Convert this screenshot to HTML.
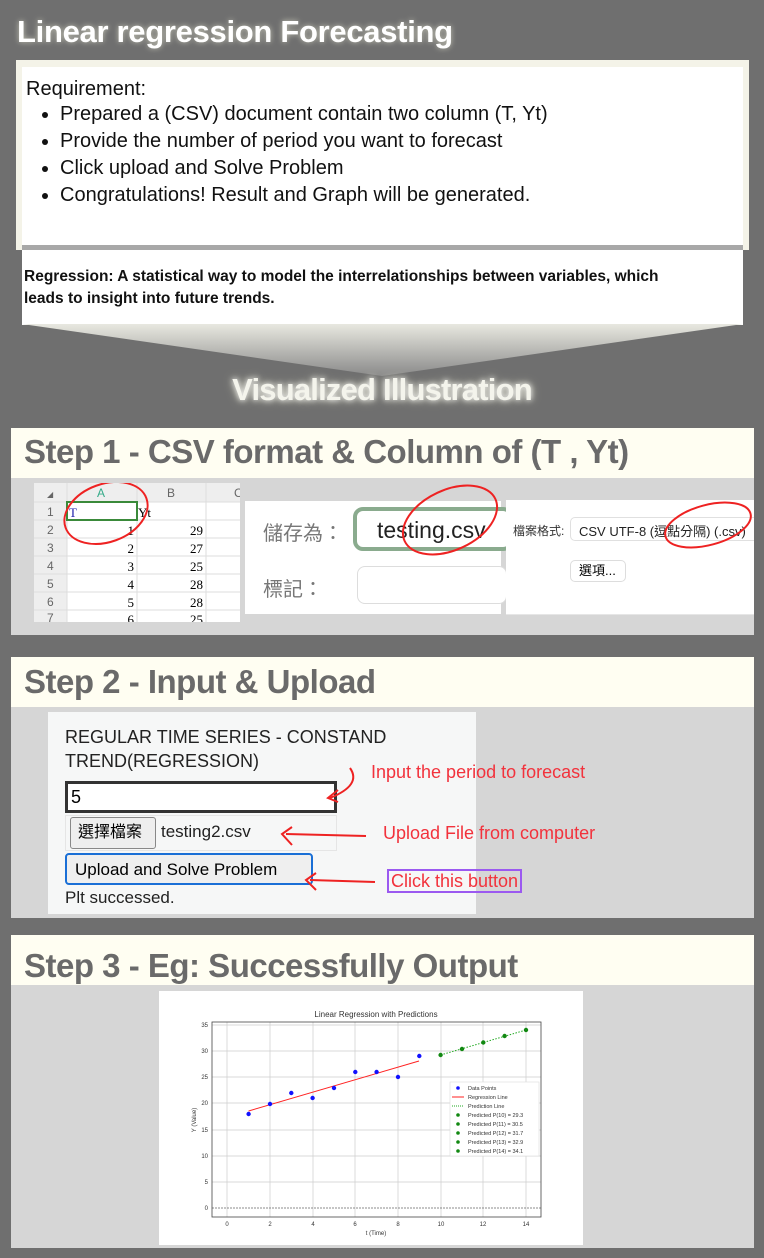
<!DOCTYPE html><html><head><meta charset="utf-8"><style>
*{margin:0;padding:0;box-sizing:border-box}
body{width:764px;height:1258px;background:#6f6f6f;position:relative;overflow:hidden;font-family:"Liberation Sans","Noto Sans CJK TC",sans-serif}
.a{position:absolute}
.h{font-weight:bold;color:#6a6a6a;font-size:33px;letter-spacing:-0.5px;white-space:nowrap}
.sec{background:#d6d6d6}
.hd{background:#fffef2}
ul{margin-left:34px}
li{font-size:20px;line-height:27px;color:#111}
.red{color:#f2323c;font-size:18px;white-space:nowrap}
</style></head><body>
<div class="a" style="left:17px;top:14px;color:#fff;font-weight:bold;font-size:31px;letter-spacing:-0.3px;text-shadow:0 0 6px rgba(255,255,230,.6)">Linear regression Forecasting</div>
<div class="a" style="left:16px;top:60px;width:733px;height:190px;background:#f4f3e8"></div>
<div class="a" style="left:22px;top:67px;width:721px;height:178px;background:#fff;padding:10px 4px">
<div style="font-size:20px;color:#111;line-height:24px">Requirement:</div>
<ul><li>Prepared a (CSV) document contain two column (T, Yt)</li><li>Provide the number of period you want to forecast</li><li>Click upload and Solve Problem</li><li>Congratulations! Result and Graph will be generated.</li></ul></div>
<div class="a" style="left:22px;top:245px;width:721px;height:5px;background:#a8a8a8"></div>
<div class="a" style="left:22px;top:250px;width:721px;height:75px;background:#fff;padding:16px 2px;font-weight:bold;font-size:15.5px;line-height:22px;color:#111;white-space:nowrap">Regression: A statistical way to model the interrelationships between variables, which<br>leads to insight into future trends.</div>
<svg class="a" style="left:0;top:324px" width="764" height="54"><defs><linearGradient id="g" x1="0" y1="0" x2="0" y2="1"><stop offset="0" stop-color="#e8e8e0"/><stop offset="1" stop-color="#8a8a8a"/></linearGradient></defs><polygon points="22,0 743,0 382,52" fill="url(#g)"/></svg>
<div class="a" style="left:0;width:764px;top:372px;text-align:center;color:#f4f4ec;font-weight:bold;font-size:31px;letter-spacing:-0.8px;text-shadow:0 0 6px #fff,0 0 10px rgba(255,255,220,.7)">Visualized Illustration</div>

<!-- Step1 -->
<div class="a sec" style="left:11px;top:428px;width:743px;height:207px"></div>
<div class="a hd" style="left:11px;top:428px;width:743px;height:50px"></div>
<div class="a h" style="left:24px;top:433px">Step 1 - CSV format &amp; Column of (T , Yt)</div>
<svg class="a" style="left:34px;top:483px" width="206" height="139" font-family="Liberation Serif" font-size="13">
<rect width="206" height="139" fill="#fff"/>
<rect width="206" height="19" fill="#eee"/><rect width="33" height="139" fill="#eee"/>
<g stroke="#ddd"><line x1="33" y1="0" x2="33" y2="139"/><line x1="103" y1="0" x2="103" y2="139"/><line x1="172" y1="0" x2="172" y2="139"/>
<line x1="0" y1="19" x2="206" y2="19"/><line x1="0" y1="37" x2="206" y2="37"/><line x1="0" y1="55" x2="206" y2="55"/><line x1="0" y1="73" x2="206" y2="73"/><line x1="0" y1="91" x2="206" y2="91"/><line x1="0" y1="109" x2="206" y2="109"/><line x1="0" y1="127" x2="206" y2="127"/></g>
<g fill="#666" font-family="Liberation Sans" font-size="12"><text x="13" y="14" font-size="8">◢</text><text x="63" y="14" fill="#3a8">A</text><text x="133" y="14">B</text><text x="200" y="14">C</text>
<text x="13" y="33">1</text><text x="13" y="51">2</text><text x="13" y="69">3</text><text x="13" y="87">4</text><text x="13" y="105">5</text><text x="13" y="123">6</text><text x="13" y="139">7</text></g>
<rect x="33" y="19" width="70" height="18" fill="none" stroke="#3a8a3a" stroke-width="2"/>
<text x="35" y="34" fill="#22a">T</text><text x="104" y="34">Yt</text>
<g text-anchor="end"><text x="100" y="52">1</text><text x="100" y="70">2</text><text x="100" y="88">3</text><text x="100" y="106">4</text><text x="100" y="124">5</text><text x="100" y="141">6</text>
<text x="169" y="52">29</text><text x="169" y="70">27</text><text x="169" y="88">25</text><text x="169" y="106">28</text><text x="169" y="124">28</text><text x="169" y="141">25</text></g>
<ellipse cx="72" cy="30" rx="43" ry="29" fill="none" stroke="#e22" stroke-width="2" transform="rotate(-20 72 30)"/>
</svg>
<div class="a" style="left:245px;top:501px;width:256px;height:113px;background:#fff"></div>
<div class="a" style="left:263px;top:517px;font-size:20px;color:#777">儲存為：</div>
<div class="a" style="left:263px;top:573px;font-size:20px;color:#777">標記：</div>
<div class="a" style="left:353px;top:507px;width:160px;height:44px;border:4px solid #8aab8e;border-radius:10px;background:#fff;padding:6px 0 0 20px;font-size:23px;color:#222">testing.csv</div>
<div class="a" style="left:357px;top:566px;width:150px;height:38px;border:1px solid #ddd;border-radius:8px;background:#fff"></div>
<div class="a" style="left:506px;top:500px;width:248px;height:115px;background:#fff;border-bottom:1px solid #e6e6e6;overflow:hidden">
<div class="a" style="left:7px;top:22px;font-size:12px;color:#333">檔案格式:</div>
<div class="a" style="left:64px;top:17px;width:200px;height:24px;border:1px solid #e0e0e0;border-radius:5px;padding:3px 0 0 8px;font-size:13px;color:#222;white-space:nowrap;background:#fff">CSV UTF-8 (逗點分隔) (.csv)</div>
<div class="a" style="left:64px;top:60px;width:56px;height:22px;border:1px solid #ddd;border-radius:5px;font-size:13px;line-height:20px;padding-left:8px;background:#fff">選項...</div>
</div>
<svg class="a" style="left:0;top:480px" width="764" height="150"><g fill="none" stroke="#e22" stroke-width="2"><ellipse cx="450" cy="40" rx="50" ry="30" transform="rotate(-25 450 40)"/><ellipse cx="708" cy="45" rx="44" ry="20" transform="rotate(-15 708 45)"/></g></svg>

<!-- Step2 -->
<div class="a sec" style="left:11px;top:657px;width:743px;height:261px"></div>
<div class="a hd" style="left:11px;top:657px;width:743px;height:50px"></div>
<div class="a h" style="left:24px;top:663px">Step 2 - Input &amp; Upload</div>
<div class="a" style="left:48px;top:712px;width:428px;height:202px;background:#f6f7f7"></div>
<div class="a" style="left:65px;top:725px;font-size:18px;line-height:24px;color:#222">REGULAR TIME SERIES - CONSTAND<br>TREND(REGRESSION)</div>
<div class="a" style="left:65px;top:781px;width:272px;height:32px;border:3px solid #333;background:#fff;font-size:18px;padding:3px 0 0 3px">5</div>
<div class="a" style="left:65px;top:815px;width:272px;height:36px;border:1px solid #e5e5e5"></div>
<div class="a" style="left:70px;top:817px;width:86px;height:32px;border:1px solid #888;border-radius:3px;background:#eee;font-size:16px;line-height:30px;padding-left:7px">選擇檔案</div>
<div class="a" style="left:161px;top:822px;font-size:17px;color:#222">testing2.csv</div>
<div class="a" style="left:65px;top:853px;width:248px;height:32px;border:2px solid #1a6fd6;border-radius:4px;background:#efefef;font-size:17px;padding:5px 0 0 8px;white-space:nowrap">Upload and Solve Problem</div>
<div class="a" style="left:65px;top:888px;font-size:17px;color:#222">Plt successed.</div>
<div class="a red" style="left:371px;top:762px">Input the period to forecast</div>
<div class="a red" style="left:383px;top:823px">Upload File from computer</div>
<div class="a red" style="left:387px;top:869px;border:2px solid #9b59f0;padding:0 2px;height:24px;line-height:20px">Click this button</div>
<svg class="a" style="left:0;top:650px" width="764" height="260"><g fill="none" stroke="#e22" stroke-width="2"><path d="M350 118 Q362 135 330 148"/><path d="M338 140 L328 148 L338 152"/><path d="M366 186 L286 184"/><path d="M292 177 L282 184 L292 195"/><path d="M375 232 L310 230"/><path d="M316 223 L306 230 L316 240"/></g></svg>

<!-- Step3 -->
<div class="a sec" style="left:11px;top:935px;width:743px;height:313px"></div>
<div class="a hd" style="left:11px;top:935px;width:743px;height:50px"></div>
<div class="a h" style="left:24px;top:947px">Step 3 - Eg: Successfully Output</div>
<svg class="a" style="left:0;top:0" width="764" height="1258" font-family="Liberation Sans" font-size="6" fill="#333">
<rect x="159" y="991" width="424" height="254" fill="#fff"/>
<text x="376" y="1017" font-size="8" text-anchor="middle">Linear Regression with Predictions</text>
<g stroke="#ccc" stroke-width="0.7">
<line x1="227" y1="1022" x2="227" y2="1217"/><line x1="270" y1="1022" x2="270" y2="1217"/><line x1="313" y1="1022" x2="313" y2="1217"/><line x1="355" y1="1022" x2="355" y2="1217"/><line x1="398" y1="1022" x2="398" y2="1217"/><line x1="441" y1="1022" x2="441" y2="1217"/><line x1="483" y1="1022" x2="483" y2="1217"/><line x1="526" y1="1022" x2="526" y2="1217"/>
<line x1="212" y1="1025" x2="541" y2="1025"/><line x1="212" y1="1051" x2="541" y2="1051"/><line x1="212" y1="1077" x2="541" y2="1077"/><line x1="212" y1="1103" x2="541" y2="1103"/><line x1="212" y1="1130" x2="541" y2="1130"/><line x1="212" y1="1156" x2="541" y2="1156"/><line x1="212" y1="1182" x2="541" y2="1182"/></g>
<line x1="212" y1="1208" x2="541" y2="1208" stroke="#666" stroke-width="0.7" stroke-dasharray="2 1"/>
<rect x="212" y="1022" width="329" height="195" fill="none" stroke="#444" stroke-width="0.8"/>
<g text-anchor="middle"><text x="227" y="1226">0</text><text x="270" y="1226">2</text><text x="313" y="1226">4</text><text x="355" y="1226">6</text><text x="398" y="1226">8</text><text x="441" y="1226">10</text><text x="483" y="1226">12</text><text x="526" y="1226">14</text><text x="376" y="1235">t (Time)</text></g>
<g text-anchor="end"><text x="208" y="1027">35</text><text x="208" y="1053">30</text><text x="208" y="1079">25</text><text x="208" y="1105">20</text><text x="208" y="1132">15</text><text x="208" y="1158">10</text><text x="208" y="1184">5</text><text x="208" y="1210">0</text></g>
<text transform="translate(196 1120) rotate(-90)" text-anchor="middle">Y (Value)</text>
<line x1="248.6" y1="1111" x2="419" y2="1061" stroke="#f22" stroke-width="1"/>
<line x1="440.6" y1="1055" x2="526" y2="1030" stroke="#2a2" stroke-width="1" stroke-dasharray="1.5 1.5"/>
<g fill="#11f"><circle cx="248.6" cy="1114" r="2.2"/><circle cx="270" cy="1104" r="2.2"/><circle cx="291.3" cy="1093" r="2.2"/><circle cx="312.6" cy="1098" r="2.2"/><circle cx="334" cy="1088" r="2.2"/><circle cx="355.3" cy="1072" r="2.2"/><circle cx="376.6" cy="1072" r="2.2"/><circle cx="398" cy="1077" r="2.2"/><circle cx="419.3" cy="1056" r="2.2"/></g>
<g fill="#181"><circle cx="440.6" cy="1055" r="2.2"/><circle cx="462" cy="1049" r="2.2"/><circle cx="483.3" cy="1042.5" r="2.2"/><circle cx="504.6" cy="1036" r="2.2"/><circle cx="526" cy="1030" r="2.2"/></g>
<rect x="450" y="1082" width="89" height="74" fill="#fff" stroke="#ddd" stroke-width="0.6"/>
<circle cx="458" cy="1088" r="1.8" fill="#11f"/><line x1="452" y1="1097" x2="464" y2="1097" stroke="#f22"/><line x1="452" y1="1106" x2="464" y2="1106" stroke="#2a2" stroke-dasharray="1 1"/>
<g fill="#181"><circle cx="458" cy="1115" r="1.8"/><circle cx="458" cy="1124" r="1.8"/><circle cx="458" cy="1133" r="1.8"/><circle cx="458" cy="1142" r="1.8"/><circle cx="458" cy="1151" r="1.8"/></g>
<g font-size="5.5"><text x="468" y="1090">Data Points</text><text x="468" y="1099">Regression Line</text><text x="468" y="1108">Prediction Line</text><text x="468" y="1117">Predicted P(10) = 29.3</text><text x="468" y="1126">Predicted P(11) = 30.5</text><text x="468" y="1135">Predicted P(12) = 31.7</text><text x="468" y="1144">Predicted P(13) = 32.9</text><text x="468" y="1153">Predicted P(14) = 34.1</text></g>
</svg>
</body></html>
